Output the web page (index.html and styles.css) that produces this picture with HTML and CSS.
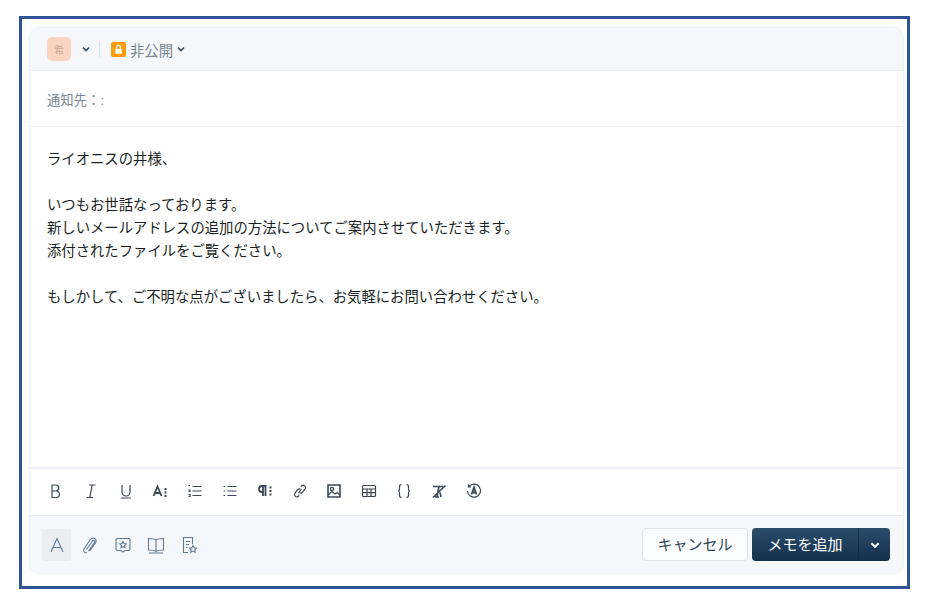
FILE: index.html
```html
<!DOCTYPE html>
<html lang="ja">
<head>
    <meta charset="UTF-8">
    <title>メモを追加</title>
    <link rel="stylesheet" href="styles.css">
</head>
<body>
    <div class="frame">
        <div class="card">
            <div class="head">
                <span class="avatar">希</span>
                <svg class="chev chev-a" viewBox="0 0 10 10"><path d="M2 3.5l3 3 3-3"/></svg>
                <span class="divider"></span>
                <span class="lock">
                    <svg viewBox="0 0 14 14"><path class="lock-body" d="M4 6.5h6V11H4z"/><path class="lock-arc" d="M5.2 6.5V5a1.8 1.8 0 0 1 3.6 0v1.5"/></svg>
                </span>
                <span class="privacy">非公開</span>
                <svg class="chev" viewBox="0 0 10 10"><path d="M2 3.5l3 3 3-3"/></svg>
            </div>
            <div class="notify">通知先：:</div>
            <div class="message">
                <p>ライオニスの井様、</p>
                <p class="blank"></p>
                <p>いつもお世話なっております。</p>
                <p>新しいメールアドレスの追加の方法についてご案内させていただきます。</p>
                <p>添付されたファイルをご覧ください。</p>
                <p class="blank"></p>
                <p>もしかして、ご不明な点がございましたら、お気軽にお問い合わせください。</p>
            </div>
            <div class="toolbar">
                <svg class="tool" viewBox="0 0 18 18"><path d="M5 3h3.700a2.900 2.900 0 0 1 0 6H5zM5 9h4.200a3.200 3.200 0 0 1 0 6.500H5z"/></svg>
                <svg class="tool" viewBox="0 0 18 18"><path d="M7 3h6.500M4.500 15.500H11M10.200 3L7.800 15.500"/></svg>
                <svg class="tool" viewBox="0 0 18 18"><path d="M5 3v7a4 4 0 0 0 8 0V3M4 16h10"/></svg>
                <svg class="tool" viewBox="0 0 18 18"><path class="thick" d="M2.5 14l4-9.500 4 9.500M4 11h5"/><path class="thick" d="M13.500 7h2M13.500 10.500h2M13.500 14h2"/></svg>
                <svg class="tool" viewBox="0 0 18 18"><path d="M6.500 4.500h9M6.500 9h9M6.500 13.500h9M2.500 3.500H4M2.500 8H4v1.500H2.500M2.500 12.500H4v2H2.500"/></svg>
                <svg class="tool" viewBox="0 0 18 18"><path d="M6.500 4.500h9M6.500 9h9M6.500 13.500h9M2.500 4.500H4M2.500 9H4M2.500 13.500H4"/></svg>
                <svg class="tool" viewBox="0 0 18 18"><path class="thick" d="M7 4v10M9.500 4v10M10.500 4H6a3 3 0 0 0 0 6h1"/><path class="thick" d="M13.500 5.500h2M13.500 9h2M13.500 12.500h2"/></svg>
                <svg class="tool" viewBox="0 0 18 18"><path d="M7.500 11l3-4M9.800 4.800l.8-1a2.300 2.300 0 0 1 3.600 2.800l-2.600 3.600a2.300 2.300 0 0 1-3 .6M8.200 13.200l-.8 1a2.300 2.300 0 0 1-3.600-2.800l2.600-3.600a2.300 2.300 0 0 1 3-.6"/></svg>
                <svg class="tool" viewBox="0 0 18 18"><path class="frame-line" d="M3 3h12v12H3z"/><path d="M3 13l4-3.500 3 2.500 2-1.500 3 2.500"/><circle cx="7" cy="7" r="1.600"/></svg>
                <svg class="tool" viewBox="0 0 18 18"><path d="M3.500 3.500h11a1 1 0 0 1 1 1v9a1 1 0 0 1-1 1h-11a1 1 0 0 1-1-1v-9a1 1 0 0 1 1-1zM2.500 7h13M2.500 10.700h13M7 7v7.500M11 7v7.500"/></svg>
                <svg class="tool" viewBox="0 0 18 18"><path d="M6.500 2.500c-1.800 0-2 1-2 2.500v2c0 1-.5 2-1.500 2 1 0 1.500 1 1.500 2v2c0 1.500.2 2.500 2 2.500M11.500 2.500c1.800 0 2 1 2 2.500v2c0 1 .5 2 1.500 2-1 0-1.500 1-1.500 2v2c0 1.500-.2 2.500-2 2.500"/></svg>
                <svg class="tool" viewBox="0 0 18 18"><path class="frame-line" d="M3 4.500h10M3 15.500L15.500 3.500M9 4.500L7 15M5 15h4M10 10.500l1 4.500"/></svg>
                <svg class="tool" viewBox="0 0 18 18"><path d="M4 4.500a6.500 6.500 0 1 1-1.500 4.500M3.500 2.500V5H6"/><path class="thick" d="M6.500 12.500L9 5.500l2.500 7M7.500 10.500h3"/></svg>
            </div>
            <div class="foot">
                <div class="foot-icons">
                    <span class="foot-icon active">
                        <svg viewBox="0 0 20 20"><path d="M4 17L10 3.500 16 17M6.200 12.500h7.600"/></svg>
                    </span>
                    <span class="foot-icon">
                        <svg viewBox="0 0 20 20"><path d="M7 17.500c-2 .8-4-1-3.200-3.200L10 5c1.500-2 3.500-2.500 5-1.300 1.500 1.200 1.300 3.300 0 5l-5.500 7.500M6.500 14.500l6-8.500c1-1.300 3 .2 2 1.500l-6 8.500"/></svg>
                    </span>
                    <span class="foot-icon">
                        <svg viewBox="0 0 20 20"><path d="M4.500 3.500h11A1.500 1.500 0 0 1 17 5v9a1.500 1.500 0 0 1-1.500 1.500H12L10 17l-2-1.500H4.500A1.500 1.500 0 0 1 3 14V5a1.500 1.500 0 0 1 1.500-1.500z"/><path d="M10 6.500l1 2 2.200.3-1.600 1.500.4 2.200-2-1-2 1 .4-2.200-1.600-1.500 2.200-.3z"/></svg>
                    </span>
                    <span class="foot-icon">
                        <svg viewBox="0 0 20 20"><path d="M10 5C8.500 3.800 6 3.500 2.500 3.500V15c3.500 0 6 .3 7.500 1.500 1.500-1.200 4-1.500 7.500-1.500V3.500C14 3.500 11.500 3.800 10 5zM10 5v11.500M3 18h14"/></svg>
                    </span>
                    <span class="foot-icon">
                        <svg viewBox="0 0 20 20"><path d="M9 17.500H4.500v-15h9V9M7 6.500h4M7 9.500h3M7 12.500h1.500"/><path d="M14 10.500l1.200 2.300 2.300.3-1.700 1.700.4 2.400-2.200-1.100-2.200 1.100.4-2.400-1.700-1.700 2.300-.3z"/></svg>
                    </span>
                </div>
                <div class="actions">
                    <button class="btn-cancel" type="button">キャンセル</button>
                    <div class="btn-group">
                        <button class="btn-add" type="button">メモを追加</button>
                        <button class="btn-more" type="button">
                            <svg viewBox="0 0 10 10"><path d="M2 3.500l3 3 3-3"/></svg>
                        </button>
                    </div>
                </div>
            </div>
        </div>
    </div>
</body>
</html>
```

FILE: styles.css
```css
html, body {
    margin: 0;
    padding: 0;
    background: #fff;
}
body {
    font-family: "Liberation Sans", "Noto Sans CJK JP", sans-serif;
    color: #1f2933;
}
.frame {
    box-sizing: border-box;
    width: 891px;
    height: 573px;
    margin: 16px 0 0 19px;
    padding: 9px 4px 13px 8px;
    border: 3px solid #2f5496;
    background: #fff;
}
.card {
    height: 100%;
    display: flex;
    flex-direction: column;
    border-radius: 10px;
    background: #fff;
    box-shadow: 0 0 3px rgba(60, 80, 110, 0.22);
    overflow: hidden;
}
.head {
    box-sizing: border-box;
    height: 43px;
    display: flex;
    align-items: center;
    padding-left: 17px;
    background: #f5f7fa;
    border-bottom: 1px solid #e9edf2;
}
.avatar {
    width: 24px;
    height: 24px;
    display: flex;
    align-items: center;
    justify-content: center;
    border-radius: 5px;
    background: #fbd5c2;
    color: #c7a696;
    font-size: 10px;
}
.chev {
    width: 10px;
    height: 10px;
    fill: none;
    stroke: #33475b;
    stroke-width: 1.6;
}
.chev-a {
    margin-left: 10px;
}
.divider {
    width: 1px;
    height: 16px;
    margin: 0 11px 0 8px;
    background: #dde2e8;
}
.lock {
    width: 15px;
    height: 15px;
    border-radius: 2px;
    background: #ff9c0a;
}
.lock svg {
    display: block;
    width: 15px;
    height: 15px;
}
.lock-body {
    fill: #fff;
}
.lock-arc {
    fill: none;
    stroke: #fff;
    stroke-width: 1.2;
}
.privacy {
    margin: 0 3px 0 4px;
    font-size: 14.35px;
    color: #78838f;
}
.notify {
    box-sizing: border-box;
    height: 56px;
    padding: 20px 0 0 17px;
    font-size: 13.35px;
    line-height: 20px;
    color: #7d8791;
    border-bottom: 1px solid #e9edf2;
}
.message {
    flex: 1;
    padding: 21px 0 0 17px;
    font-size: 14.35px;
    line-height: 23px;
    color: #1a1f24;
}
.message p {
    margin: 0;
}
.blank {
    height: 23px;
}
.toolbar {
    box-sizing: border-box;
    height: 48px;
    display: flex;
    align-items: center;
    gap: 16.8px;
    padding: 0 0 2px 17px;
    border-top: 2px solid #eef1f5;
}
.tool {
    width: 18px;
    height: 18px;
    fill: none;
    stroke: #3b4754;
    stroke-width: 1.2;
}
.thick {
    stroke-width: 1.8;
}
.frame-line {
    stroke-width: 1.6;
}
.foot {
    box-sizing: border-box;
    height: 58px;
    display: flex;
    align-items: center;
    justify-content: space-between;
    padding: 0 13px 0 12px;
    background: #f5f7fa;
    border-top: 1px solid #e9edf2;
}
.foot-icons {
    display: flex;
    align-items: center;
    gap: 4px;
}
.foot-icon {
    width: 29px;
    height: 32px;
    display: flex;
    align-items: center;
    justify-content: center;
}
.foot-icon.active {
    background: #eaedf1;
    border-radius: 2px;
}
.foot-icon svg {
    width: 20px;
    height: 20px;
    fill: none;
    stroke: #5f7a96;
    stroke-width: 1.1;
}
.actions {
    display: flex;
    align-items: center;
    gap: 4px;
}
.btn-cancel {
    box-sizing: border-box;
    width: 106px;
    height: 33px;
    padding: 0 0 2px;
    border: 1px solid #dfe3e8;
    border-radius: 4px;
    background: #fbfcfd;
    font-family: inherit;
    font-size: 15px;
    color: #33475b;
}
.btn-group {
    display: flex;
    height: 33px;
    border-radius: 4px;
    overflow: hidden;
    background: linear-gradient(#2b4c6b, #12314d);
}
.btn-add {
    width: 107px;
    padding: 0 0 2px;
    border: 0;
    border-right: 1px solid #0f2a42;
    background: none;
    font-family: inherit;
    font-size: 15px;
    color: #fff;
}
.btn-more {
    width: 31px;
    padding: 0;
    border: 0;
    background: none;
}
.btn-more svg {
    display: block;
    width: 12px;
    height: 12px;
    margin: 0 auto;
    fill: none;
    stroke: #fff;
    stroke-width: 1.6;
}
```
